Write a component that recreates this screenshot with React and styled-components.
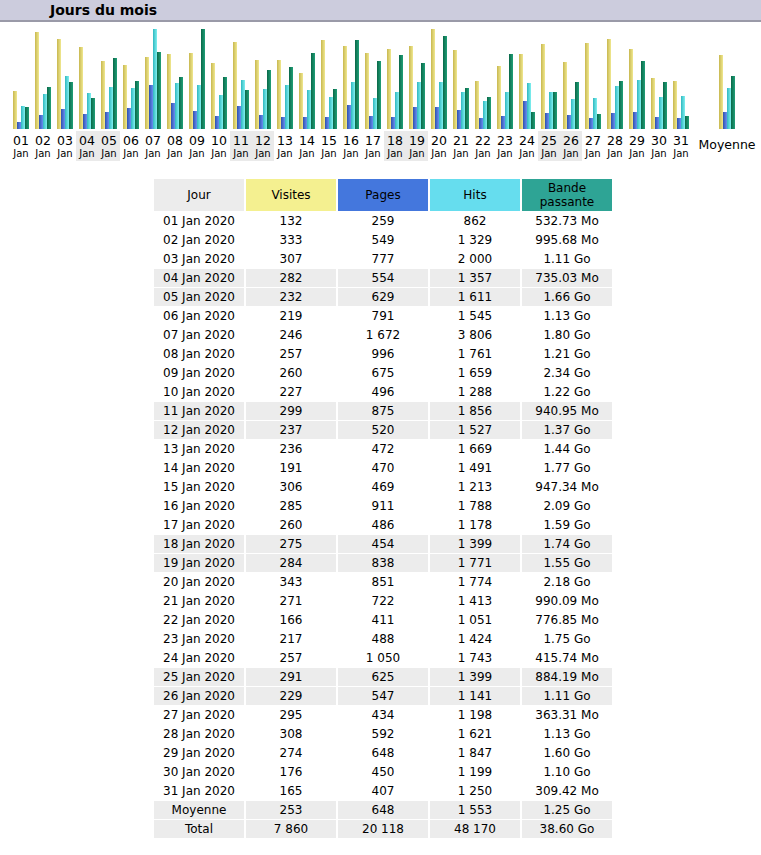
import React from "react";
import styled, { createGlobalStyle } from "styled-components";

const G = createGlobalStyle`
  body { margin: 0; background: #fff; font-family: "DejaVu Sans", Verdana, sans-serif; color: #000; overflow: hidden; }
`;

const raw = `132 259 862 532.73M
333 549 1329 995.68M
307 777 2000 1.11G
282 554 1357 735.03M
232 629 1611 1.66G
219 791 1545 1.13G
246 1672 3806 1.80G
257 996 1761 1.21G
260 675 1659 2.34G
227 496 1288 1.22G
299 875 1856 940.95M
237 520 1527 1.37G
236 472 1669 1.44G
191 470 1491 1.77G
306 469 1213 947.34M
285 911 1788 2.09G
260 486 1178 1.59G
275 454 1399 1.74G
284 838 1771 1.55G
343 851 1774 2.18G
271 722 1413 990.09M
166 411 1051 776.85M
217 488 1424 1.75G
257 1050 1743 415.74M
291 625 1399 884.19M
229 547 1141 1.11G
295 434 1198 363.31M
308 592 1621 1.13G
274 648 1847 1.60G
176 450 1199 1.10G
165 407 1250 309.42M`;

const rows = raw.split("\n").map((l, i) => {
  const [v, p, h, b] = l.split(" ");
  const unit = b.slice(-1);
  const num = parseFloat(b);
  return {
    d: String(i + 1).padStart(2, "0"),
    v: +v, p: +p, h: +h,
    go: unit === "G" ? num : num / 1024,
    bw: num.toFixed(2) + (unit === "G" ? " Go" : " Mo"),
    we: [4, 5, 11, 12, 18, 19, 25, 26].includes(i + 1),
  };
});

const fmt = (n) => String(n).replace(/\B(?=(\d{3})+(?!\d))/g, "\u00a0");

const Title = styled.div`
  height: 20px; background: #ccccdd; border-bottom: 2px solid #9a9aa8;
  font-weight: bold; font-size: 14px; line-height: 20px; padding-left: 50px;
`;
const Chart = styled.div`
  display: flex; padding-left: 10px; margin-top: 6px;
`;
const Col = styled.div`
  width: ${(p) => p.$w || 22}px; flex-shrink: 0; display: flex; flex-direction: column; align-items: center;
`;
const Bars = styled.div`
  height: 101px; display: flex; align-items: flex-end; justify-content: center;
`;
const Bar = styled.div`
  width: 4px;
  background: linear-gradient(to right, ${(p) => p.$c1}, ${(p) => p.$c2});
`;
const Lab = styled.div`
  margin-top: 2px; width: 100%; text-align: center; background: ${(p) => (p.$we ? "#eaeaea" : "transparent")};
  padding: 2px 0 1px;
`;
const Num = styled.div` font-size: 12.5px; line-height: 15px; `;
const Mon = styled.div` font-size: 10px; line-height: 12px; `;
const Moy = styled.div` font-size: 12.5px; line-height: 15px; margin-top: 8px; `;

const Table = styled.table`
  margin: 17px 0 0 152px; border-spacing: 2px 1px; font-size: 12px;
`;
const Th = styled.th`
  width: 90px; height: 32px; font-weight: normal; background: ${(p) => p.$bg}; line-height: 14px; padding: 0;
`;
const Td = styled.td`
  text-align: center; height: 18px; padding: 0; background: ${(p) => (p.$g ? "#ececec" : "transparent")};
`;

const C = {
  v: ["#c8b850", "#f0e890"], p: ["#3050b0", "#6890f0"], h: ["#30b8c0", "#80f0f0"], b: ["#0a6848", "#20a078"],
};
const sc = (x, m) => Math.round((x / m) * 100);

function Bars4({ r }) {
  return (
    <Bars>
      <Bar $c1={C.v[0]} $c2={C.v[1]} style={{ height: sc(r.v, 343) }} />
      <Bar $c1={C.p[0]} $c2={C.p[1]} style={{ height: sc(r.p, 3806) }} />
      <Bar $c1={C.h[0]} $c2={C.h[1]} style={{ height: sc(r.h, 3806) }} />
      <Bar $c1={C.b[0]} $c2={C.b[1]} style={{ height: sc(r.go, 2.34) }} />
    </Bars>
  );
}

export default function App() {
  return (
    <>
      <G />
      <Title>Jours du mois</Title>
      <Chart>
        {rows.map((r) => (
          <Col key={r.d}>
            <Bars4 r={r} />
            <Lab $we={r.we}><Num>{r.d}</Num><Mon>Jan</Mon></Lab>
          </Col>
        ))}
        <Col $w={70}>
          <Bars4 r={{ v: 253, p: 648, h: 1553, go: 1.25 }} />
          <Moy>Moyenne</Moy>
        </Col>
      </Chart>
      <Table>
        <thead>
          <tr>
            <Th $bg="#ececec">Jour</Th>
            <Th $bg="#f4f090">Visites</Th>
            <Th $bg="#4477dd">Pages</Th>
            <Th $bg="#66ddee">Hits</Th>
            <Th $bg="#2ea495">Bande<br />passante</Th>
          </tr>
        </thead>
        <tbody>
          {rows.map((r) => (
            <tr key={r.d}>
              <Td $g={r.we}>{r.d} Jan 2020</Td>
              <Td $g={r.we}>{fmt(r.v)}</Td>
              <Td $g={r.we}>{fmt(r.p)}</Td>
              <Td $g={r.we}>{fmt(r.h)}</Td>
              <Td $g={r.we}>{r.bw}</Td>
            </tr>
          ))}
          <tr>
            <Td $g>Moyenne</Td><Td $g>253</Td><Td $g>648</Td><Td $g>{fmt(1553)}</Td><Td $g>1.25 Go</Td>
          </tr>
          <tr>
            <Td $g>Total</Td><Td $g>{fmt(7860)}</Td><Td $g>{fmt(20118)}</Td><Td $g>{fmt(48170)}</Td><Td $g>38.60 Go</Td>
          </tr>
        </tbody>
      </Table>
    </>
  );
}
